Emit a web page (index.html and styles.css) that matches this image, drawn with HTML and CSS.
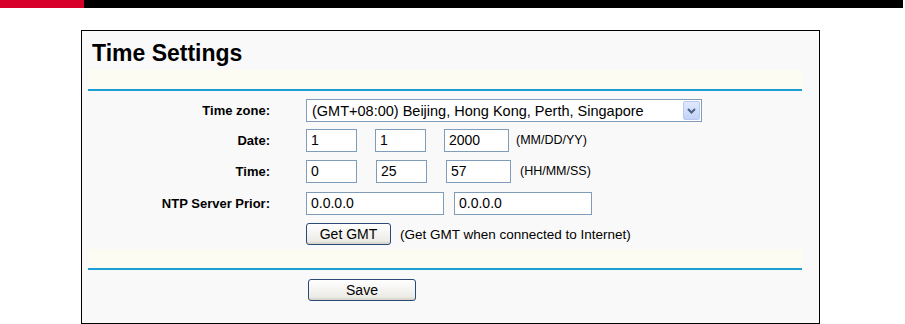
FILE: index.html
```html
<!DOCTYPE html>
<html lang="en">
<head>
  <meta charset="UTF-8" />
  <title>Time Settings</title>
  <link rel="stylesheet" href="styles.css">
</head>
<body>

  <div class="topbar">
    <div class="topbar-red"></div>
    <div class="topbar-black"></div>
  </div>

  <div class="panel">
    <h1 class="title">Time Settings</h1>
    <div class="band"></div>

    <form class="settings">
      <label class="label">Time zone:</label>
      <div class="field">
        <div class="select">
          <span>(GMT+08:00) Beijing, Hong Kong, Perth, Singapore</span>
          <span class="select-arrow">
            <svg width="9" height="6" viewBox="0 0 9 6"><path d="M1 1 L4.5 4.5 L8 1" fill="none" stroke="#4d6185" stroke-width="2"/></svg>
          </span>
        </div>
      </div>

      <label class="label">Date:</label>
      <div class="field date">
        <input type="text" class="short" value="1">
        <input type="text" class="short" value="1">
        <input type="text" class="year" value="2000">
        <span class="hint">(MM/DD/YY)</span>
      </div>

      <label class="label">Time:</label>
      <div class="field time">
        <input type="text" class="short" value="0">
        <input type="text" class="short" value="25">
        <input type="text" class="year" value="57">
        <span class="hint">(HH/MM/SS)</span>
      </div>

      <label class="label">NTP Server Prior:</label>
      <div class="field ntp">
        <input type="text" class="server" value="0.0.0.0">
        <input type="text" class="server" value="0.0.0.0">
      </div>

      <span class="label"></span>
      <div class="field">
        <button type="button" class="btn gmt">Get GMT</button>
        <span class="hint gmt-hint">(Get GMT when connected to Internet)</span>
      </div>
    </form>

    <div class="band"></div>

    <div class="actions">
      <button type="button" class="btn save">Save</button>
    </div>
  </div>

</body>
</html>
```

FILE: styles.css
```css
* { box-sizing: border-box; }
body {
  margin: 0;
  background: #fff;
  font-family: "Liberation Sans", Arial, sans-serif;
  color: #000;
}

.topbar {
  display: flex;
  height: 8px;
}
.topbar-red {
  width: 84px;
  background: #d7002a;
}
.topbar-black {
  flex: 1;
  background: #000;
  margin-right: 2px;
}

.panel {
  margin: 22px 0 0 81px;
  width: 739px;
  height: 294px;
  border: 1px solid #000;
  background: #f9f9f9;
}

.title {
  margin: 0;
  padding: 9px 0 0 10px;
  height: 39px;
  font-size: 23px;
  line-height: 26px;
  font-weight: bold;
}

.band {
  margin: 0 17px 0 6px;
  height: 21px;
  background: #fcfcf3;
  border-bottom: 2px solid #1a9fd6;
}

.settings {
  margin: 5px 17px 0 6px;
  display: grid;
  grid-template-columns: 182px 1fr;
  grid-template-rows: 29px 30px 32px 32px 30px;
  column-gap: 36px;
  align-items: center;
}

.label {
  text-align: right;
  font-size: 13px;
  font-weight: bold;
}

.field {
  display: flex;
  align-items: center;
}
.date { gap: 18px; }
.time { gap: 19px; }
.ntp { gap: 10px; }

input {
  height: 23px;
  border: 1px solid #7f9db9;
  background: #fff;
  padding: 0 4px;
  font-family: inherit;
  font-size: 14px;
  color: #000;
}
.short { width: 51px; }
.year { width: 65px; }
.server { width: 138px; }

.hint {
  font-size: 12.5px;
  margin-left: -11px;
}
.time .hint { margin-left: -10px; }
.gmt-hint {
  margin-left: 9px;
  font-size: 13.5px;
}

.select {
  display: flex;
  align-items: center;
  justify-content: space-between;
  width: 396px;
  height: 23px;
  border: 1px solid #7f9db9;
  background: #fff;
  padding: 0 1px 0 5px;
  font-size: 14.5px;
}
.select-arrow {
  display: flex;
  align-items: center;
  justify-content: center;
  width: 17px;
  height: 19px;
  background: linear-gradient(#e0e9fd, #c3d3f8);
  border: 1px solid #b8c9f0;
  border-radius: 2px;
}

.btn {
  height: 22px;
  border: 1px solid #2a4a78;
  border-radius: 3px;
  background: linear-gradient(#ffffff, #ecebe6 85%, #d6d0c5);
  font-family: inherit;
  font-size: 14px;
  color: #000;
  padding: 0;
}
.gmt { width: 85px; }
.save { width: 108px; }

.actions {
  padding: 9px 0 0 226px;
}
```
